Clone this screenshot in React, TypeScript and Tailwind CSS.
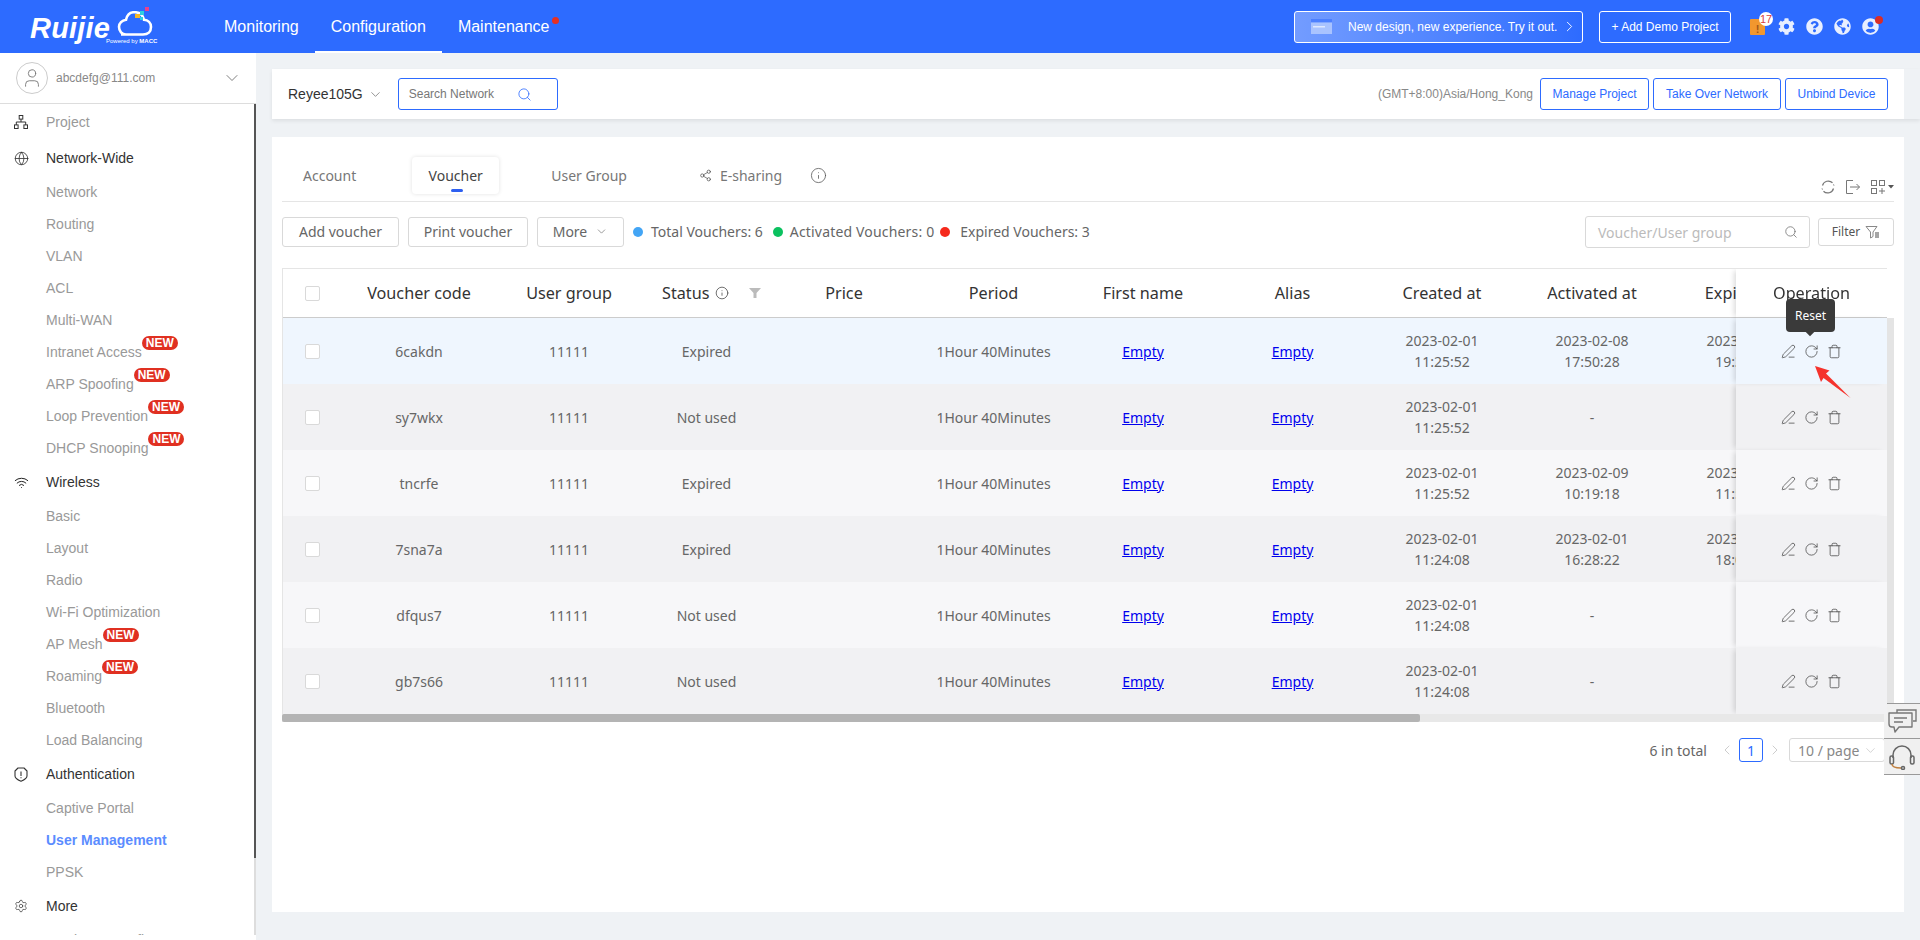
import { ChevronDown, ChevronRight, ChevronLeft, Search, Globe, Wifi, Settings, Share2, Info, PenLine, RotateCw, Trash, User } from "lucide-react";
import { FaCog, FaQuestionCircle, FaGlobeAmericas, FaUserCircle } from "react-icons/fa";

const sans = "font-['Liberation_Sans',Arial,sans-serif]";
const noto = "font-['Noto_Sans',sans-serif]";

const ProjectIcon = () => (
  <svg width="14" height="14" viewBox="0 0 14 14" fill="none" stroke="#333" strokeWidth="1">
    <rect x="5.2" y="0.5" width="3.6" height="3.6" />
    <rect x="0.5" y="9.9" width="3.6" height="3.6" />
    <rect x="9.9" y="9.9" width="3.6" height="3.6" />
    <path d="M7 4.1V7M2.3 9.9V7h9.4v2.9" />
  </svg>
);

const ShieldIcon = () => (
  <svg width="14" height="15" viewBox="0 0 14 15" fill="none" stroke="#333" strokeWidth="1.1">
    <path d="M4 1h6l3 3v5c0 2-3 4-6 5.300C4 13 1 11 1 9V4z" strokeLinejoin="round" />
    <path d="M7 4.500v4.500M7 10.300v1" />
  </svg>
);

type MenuItem = { label: string; kind: "group" | "sub"; icon?: any; isNew?: boolean; active?: boolean; muted?: boolean };

const menu: MenuItem[] = [
  { label: "Project", kind: "group", icon: <ProjectIcon />, muted: true },
  { label: "Network-Wide", kind: "group", icon: <Globe size={15} strokeWidth={1.3} color="#333" /> },
  { label: "Network", kind: "sub" },
  { label: "Routing", kind: "sub" },
  { label: "VLAN", kind: "sub" },
  { label: "ACL", kind: "sub" },
  { label: "Multi-WAN", kind: "sub" },
  { label: "Intranet Access", kind: "sub", isNew: true },
  { label: "ARP Spoofing", kind: "sub", isNew: true },
  { label: "Loop Prevention", kind: "sub", isNew: true },
  { label: "DHCP Snooping", kind: "sub", isNew: true },
  { label: "Wireless", kind: "group", icon: <Wifi size={15} strokeWidth={1.6} color="#222" /> },
  { label: "Basic", kind: "sub" },
  { label: "Layout", kind: "sub" },
  { label: "Radio", kind: "sub" },
  { label: "Wi-Fi Optimization", kind: "sub" },
  { label: "AP Mesh", kind: "sub", isNew: true },
  { label: "Roaming", kind: "sub", isNew: true },
  { label: "Bluetooth", kind: "sub" },
  { label: "Load Balancing", kind: "sub" },
  { label: "Authentication", kind: "group", icon: <ShieldIcon /> },
  { label: "Captive Portal", kind: "sub" },
  { label: "User Management", kind: "sub", active: true },
  { label: "PPSK", kind: "sub" },
  { label: "More", kind: "group", icon: <Settings size={14} strokeWidth={1.2} color="#333" /> },
  { label: "Batch CLI Config", kind: "sub" },
];

const rows = [
  { code: "6cakdn", status: "Expired", date: "2023-02-01", time: "11:25:52", act: ["2023-02-08", "17:50:28"], exp: ["2023-02-08", "19:30:28"], bg: "bg-[#eff6fe]" },
  { code: "sy7wkx", status: "Not used", date: "2023-02-01", time: "11:25:52", act: null, exp: null, bg: "bg-[#f1f1f3]" },
  { code: "tncrfe", status: "Expired", date: "2023-02-01", time: "11:25:52", act: ["2023-02-09", "10:19:18"], exp: ["2023-02-09", "11:59:18"], bg: "bg-[#f7f7f9]" },
  { code: "7sna7a", status: "Expired", date: "2023-02-01", time: "11:24:08", act: ["2023-02-01", "16:28:22"], exp: ["2023-02-01", "18:08:22"], bg: "bg-[#f1f1f3]" },
  { code: "dfqus7", status: "Not used", date: "2023-02-01", time: "11:24:08", act: null, exp: null, bg: "bg-[#f7f7f9]" },
  { code: "gb7s66", status: "Not used", date: "2023-02-01", time: "11:24:08", act: null, exp: null, bg: "bg-[#f1f1f3]" },
];

const Checkbox = () => <span className="mx-auto block h-[15px] w-[15px] -translate-x-px rounded-[2px] border border-[#d9d9d9] bg-white" />;

const Header = () => (
  <header className={`flex h-[53px] shrink-0 items-stretch bg-[#2d6bff] text-white ${sans}`}>
    <div className="relative w-[208px] shrink-0 pl-[30px]">
      <span className="block pt-[10px] text-[29px] leading-[36px] font-bold italic tracking-[0.2px]">Ruijie</span>
      <svg className="absolute top-[7px] left-[112px]" width="42" height="30" viewBox="0 0 42 30" fill="none">
        <path d="M9 27.500h22c5 0 8-3 8-7.500 0-4-3-7-7-7.300-1-4-4-7-8-7.500h-3c-4 .5-6 3-7 7.500-4 .5-7 3.500-7 7 0 4.500 3 7.800 7 7.800z" stroke="#fff" strokeWidth="2.600" />
        <rect x="23" y="7" width="5" height="4" fill="#f5b62a" />
        <rect x="28" y="4" width="4" height="4" fill="#2fd0e0" />
        <rect x="33" y="0" width="4" height="4" fill="#e9408f" />
        <rect x="28" y="10" width="3" height="3" fill="#2fd0e0" />
      </svg>
      <span className="absolute top-[37px] left-[106px] text-[6px] leading-[9px] whitespace-nowrap">Powered by <b>MACC</b></span>
    </div>
    <nav className="flex items-stretch text-[16px]">
      <a className="flex items-center px-[16px]">Monitoring</a>
      <a className="flex items-center border-b-[2px] border-white px-[16px] pt-[2px]">Configuration</a>
      <a className="relative flex items-center px-[16px]">
        Maintenance
        <span className="absolute top-[17px] right-[7px] h-[7px] w-[7px] rounded-full bg-[#e53022]" />
      </a>
    </nav>
    <div className="ml-auto flex items-center pr-[41px] text-[12px]">
      <button className="flex h-[32px] w-[289px] items-center rounded-[3px] border border-white bg-gradient-to-r from-[#739cff] to-[#2d6bff] pl-[16px]">
        <svg width="21" height="15" viewBox="0 0 21 15">
          <rect width="21" height="3.500" fill="#4d80ff" />
          <rect y="3.500" width="21" height="11.500" fill="#a9c3ff" />
          <rect x="2" y="7" width="12" height="1.500" fill="#dfe9ff" />
        </svg>
        <span className="ml-[16px]">New design, new experience. Try it out.</span>
        <ChevronRight size={17} strokeWidth={1.3} className="ml-[4px]" />
      </button>
      <button className="ml-[16px] h-[32px] w-[132px] rounded-[3px] border border-white">+ Add Demo Project</button>
      <span className="relative ml-[19px] block h-[16px] w-[15px] rounded-[1px] bg-[#f2972e] text-center text-[11px] leading-[20px] font-bold text-[#a0561a]">
        !
        <span className="absolute -top-[7px] left-[9px] flex h-[14px] w-[14px] items-center justify-center rounded-full bg-white text-[11px] font-normal text-[#d9413c]">17</span>
      </span>
      <div className="ml-[13px] flex items-center gap-[11px] text-[17px] text-[#e8efff]">
        <FaCog />
        <FaQuestionCircle />
        <FaGlobeAmericas />
        <span className="relative">
          <FaUserCircle />
          <span className="absolute -top-[2px] left-[13px] h-[8px] w-[8px] rounded-full bg-[#d92d27]" />
        </span>
      </div>
    </div>
  </header>
);

const Sidebar = () => (
  <aside className={`flex w-[256px] shrink-0 flex-col bg-white ${sans}`}>
    <div className="flex h-[51px] shrink-0 items-center border-b border-[#ddd] pr-[14px] pl-[16px]">
      <span className="flex h-[32px] w-[32px] items-center justify-center rounded-full border border-[#ccc]">
        <User size={22} strokeWidth={1} color="#777" />
      </span>
      <span className="ml-[8px] text-[12px] text-[#888]">abcdefg@111.com</span>
      <ChevronDown size={20} strokeWidth={1} color="#666" className="ml-auto" />
    </div>
    <div className="flex h-[831px] shrink-0 overflow-hidden">
      <ul className="min-w-0 flex-1 text-[14px] text-[#999]">
        {menu.map((item) =>
          item.kind === "group" ? (
            <li key={item.label} className="flex h-[36px] items-center">
              <span className="flex w-[46px] justify-center pr-[4px]">{item.icon}</span>
              <span className={item.muted ? "text-[#999]" : "text-[#333]"}>{item.label}</span>
            </li>
          ) : (
            <li key={item.label} className="flex h-[32px] shrink-0 items-center pl-[46px]">
              <span className={`relative leading-[16px] whitespace-nowrap ${item.active ? "font-bold text-[#5b8cff]" : ""}`}>
                {item.label}
                {item.isNew && (
                  <span className="absolute top-[-8px] left-full flex h-[14px] w-[36px] items-center justify-center rounded-full bg-[#e03021] text-[12px] font-bold text-white">NEW</span>
                )}
              </span>
            </li>
          )
        )}
      </ul>
      <div className="flex w-[2px] shrink-0 flex-col">
        <span className="h-[754px] bg-[#555]" />
        <span className="flex-1 bg-[#ddd]" />
      </div>
    </div>
  </aside>
);

const TopBar = () => (
  <div className={`mt-[16px] shrink-0 pr-[16px] shadow-[0_2px_4px_rgba(0,0,0,0.08)] ${sans}`}>
    <div className="flex h-[50px] items-center bg-white pr-[16px] pl-[16px]">
      <span className="text-[14px] text-[#333]">Reyee105G</span>
      <ChevronDown size={15} strokeWidth={1} color="#555" className="ml-[5px]" />
      <div className="ml-[15px] flex h-[32px] w-[160px] items-center rounded-[3px] border border-[#2d6bff] pl-[10px] text-[12px] text-[#777]">
        Search Network
        <Search size={15} strokeWidth={1.300} color="#2d6bff" className="ml-[23px]" />
      </div>
      <span className="ml-auto text-[12px] text-[#888]">(GMT+8:00)Asia/Hong_Kong</span>
      <div className="ml-[7px] flex gap-[4px] text-[12px] text-[#2d6bff]">
        <button className="h-[32px] w-[109px] rounded-[3px] border border-[#2d6bff]">Manage Project</button>
        <button className="h-[32px] w-[128px] rounded-[3px] border border-[#2d6bff]">Take Over Network</button>
        <button className="h-[32px] w-[103px] rounded-[3px] border border-[#2d6bff]">Unbind Device</button>
      </div>
    </div>
  </div>
);

const Tabs = () => (
  <div className="flex h-[65px] shrink-0 border-b border-[#e5e5e5] pt-[20px] text-[14px] text-[#777]">
    <span className="ml-[21px] flex h-[37px] items-center">Account</span>
    <span className="relative ml-[56px] flex h-[37px] w-[87px] items-center justify-center rounded-[4px] text-[#444] shadow-[0_0_4px_rgba(0,0,0,0.12)]">
      Voucher
      <span className="absolute bottom-[2px] left-[39px] h-[3px] w-[12px] rounded-full bg-[#2d5ff0]" />
    </span>
    <span className="ml-[52px] flex h-[37px] items-center">User Group</span>
    <span className="ml-[72px] flex h-[37px] items-center gap-[8px]">
      <Share2 size={13} strokeWidth={1.400} color="#555" />
      E-sharing
    </span>
    <span className="ml-[28px] flex h-[37px] items-center">
      <Info size={17} strokeWidth={1.100} color="#555" />
    </span>
    <div className="mt-[23px] ml-auto flex h-[14px] items-start gap-[11px]">
      <svg width="14" height="14" viewBox="0 0 14 14" fill="none" stroke="#777" strokeWidth="1.200">
        <path d="M1.500 5.500A6 6 0 0 1 11.500 2.800M12.500 8.500A6 6 0 0 1 2.500 11.200" />
        <path d="M1 8a6 6 0 0 0 .6 2M13 6a6 6 0 0 0-.6-2" strokeWidth="0.600" />
      </svg>
      <svg width="14" height="14" viewBox="0 0 14 14" fill="none" stroke="#777" strokeWidth="1">
        <path d="M7 .5H.5v13H7M4 7h9.500M10.500 4l3 3-3 3" />
      </svg>
      <svg width="23" height="14" viewBox="0 0 23 14" fill="none" stroke="#777" strokeWidth="1">
        <rect x=".5" y=".5" width="5" height="5" />
        <rect x="8.500" y=".5" width="5" height="5" />
        <rect x=".5" y="8.500" width="5" height="5" />
        <path d="M8 11h6M11 8v6" />
        <path d="M17 5h6l-3 3.500z" fill="#555" stroke="none" />
      </svg>
    </div>
  </div>
);

const Toolbar = () => (
  <div className="mt-[14px] flex h-[32px] shrink-0 items-center text-[14px] text-[#666]">
    <button className="h-[30px] w-[117px] rounded-[3px] border border-[#d9d9d9] pb-[2px]">Add voucher</button>
    <button className="ml-[9px] h-[30px] w-[120px] rounded-[3px] border border-[#d9d9d9] pb-[2px]">Print voucher</button>
    <button className="ml-[9px] flex h-[30px] w-[87px] items-center justify-center gap-[8px] rounded-[3px] border border-[#d9d9d9] pb-[2px]">
      More
      <ChevronDown size={13} strokeWidth={1.200} />
    </button>
    <span className="ml-[9px] h-[10px] w-[10px] rounded-full bg-[#43a5f5]" />
    <span className="ml-[8px] pb-[1px]">Total Vouchers: 6</span>
    <span className="ml-[10px] h-[10px] w-[10px] rounded-full bg-[#0bc15f]" />
    <span className="ml-[7px] pb-[1px] tracking-[0.17px]">Activated Vouchers: 0</span>
    <span className="ml-[6px] h-[10px] w-[10px] rounded-full bg-[#f5291c]" />
    <span className="ml-[10px] pb-[1px]">Expired Vouchers: 3</span>
    <div className="ml-auto flex h-[32px] w-[225px] items-center justify-between rounded-[3px] border border-[#d9d9d9] pr-[11px] pl-[12px] text-[#bbb]">
      Voucher/User group
      <Search size={14} strokeWidth={1.400} color="#777" />
    </div>
    <button className="ml-[8px] flex h-[28px] w-[76px] items-center justify-center gap-[5px] rounded-[3px] border border-[#d9d9d9] text-[12px] text-[#555]">
      Filter
      <svg width="15" height="15" viewBox="0 0 15 15" fill="none" stroke="#888" strokeWidth="1">
        <path d="M1 1.500h11L8 7v4.500L5.500 13V7z" />
        <path d="M10 8h4M10 10h4M10 12h4" strokeWidth="1.300" />
      </svg>
    </button>
  </div>
);

const OperationIcons = () => (
  <div className="flex items-center justify-center gap-[8px]">
    <PenLine size={15} strokeWidth={1.200} color="#444" />
    <RotateCw size={15} strokeWidth={1.200} color="#444" />
    <Trash size={15} strokeWidth={1.200} color="#444" />
  </div>
);

const Th = ({ children }: { children: any }) => <th className="border-b border-[#ccc] bg-white pt-[1px] text-center text-[16.200px] font-normal text-[#333]">{children}</th>;

const VoucherTable = () => (
  <div className="mt-[20px] shrink-0">
    <div className="flex">
      <div className="w-[1605px] shrink-0 overflow-hidden border-t border-l border-[#e5e5e5]">
        <table className="w-[1687px] table-fixed border-separate border-spacing-0 text-[14px] text-[#666]">
          <colgroup>
            <col className="w-[61px]" />
            <col className="w-[150px]" />
            <col className="w-[150px]" />
            <col className="w-[125px]" />
            <col className="w-[150px]" />
            <col className="w-[149px]" />
            <col className="w-[150px]" />
            <col className="w-[149px]" />
            <col className="w-[150px]" />
            <col className="w-[150px]" />
            <col className="w-[152px]" />
            <col className="w-[151px]" />
          </colgroup>
          <thead>
            <tr className="h-[49px]">
              <Th><Checkbox /></Th>
              <Th>Voucher code</Th>
              <Th>User group</Th>
              <Th>
                <div className="flex items-center pl-[18px]">
                  Status
                  <Info size={14} strokeWidth={1.300} color="#444" className="ml-[6px]" />
                  <svg className="ml-[20px]" width="12" height="12" viewBox="0 0 12 12"><path d="M0 1h12L7.500 6v5h-3V6z" fill="#bbb" /></svg>
                </div>
              </Th>
              <Th>Price</Th>
              <Th>Period</Th>
              <Th>First name</Th>
              <Th>Alias</Th>
              <Th>Created at</Th>
              <Th>Activated at</Th>
              <Th>Expired at</Th>
              <th className="sticky right-0 z-10 border-b border-[#ccc] bg-white pt-[1px] text-center text-[16.200px] font-normal text-[#333] shadow-[-4px_0_5px_-2px_rgba(0,0,0,0.14)]">Operation</th>
            </tr>
          </thead>
          <tbody>
            {rows.map((r, i) => (
              <tr key={r.code} className="h-[66px] text-center leading-[21px]">
                <td className={r.bg}><Checkbox /></td>
                <td className={r.bg}>{r.code}</td>
                <td className={r.bg}>11111</td>
                <td className={r.bg}>{r.status}</td>
                <td className={r.bg}></td>
                <td className={r.bg}>1Hour 40Minutes</td>
                <td className={r.bg}><a className="text-[#0000ee] underline">Empty</a></td>
                <td className={r.bg}><a className="text-[#0000ee] underline">Empty</a></td>
                <td className={r.bg}>{r.date}<br />{r.time}</td>
                <td className={r.bg}>{r.act ? <>{r.act[0]}<br />{r.act[1]}</> : "-"}</td>
                <td className={r.bg}>{r.exp ? <>{r.exp[0]}<br />{r.exp[1]}</> : "-"}</td>
                <td className={`${r.bg} sticky right-0 ${i === 0 ? "z-20" : "z-10"} shadow-[-4px_0_5px_-2px_rgba(0,0,0,0.14)]`}>
                  <OperationIcons />
                  {i === 0 && (
                    <>
                      <span className="absolute top-[-19px] left-[50px] flex h-[33px] w-[49px] items-center justify-center rounded-[4px] bg-[#3a3a3a] text-[12px] text-white">
                        Reset
                        <span className="absolute -bottom-[3px] left-[21px] h-[6px] w-[6px] rotate-45 bg-[#3a3a3a]" />
                      </span>
                      <svg className="absolute top-[47px] left-[78px]" width="38" height="36" viewBox="0 0 38 36">
                        <path d="M1 1l14.500 4.500-3.500 3L36.500 33 9.500 13l-2.500 4z" fill="#f5332d" />
                      </svg>
                    </>
                  )}
                </td>
              </tr>
            ))}
          </tbody>
        </table>
      </div>
      <div className="flex w-[7px] shrink-0 flex-col">
        <span className="h-[50px]" />
        <span className="flex-1 bg-[#e4e4e4]" />
      </div>
    </div>
    <div className="h-[8px] bg-[#e8e8e8]">
      <div className="h-full w-[1138px] rounded-[2px] bg-[#b4b4b4]" />
    </div>
  </div>
);

const Pagination = () => (
  <div className="mt-[16px] flex h-[24px] shrink-0 items-center pr-[9px] text-[14px] text-[#666]">
    <span className="ml-auto">6 in total</span>
    <ChevronLeft size={16} strokeWidth={1.100} color="#bbb" className="ml-[12px]" />
    <span className="ml-[4px] flex h-[24px] w-[24px] items-center justify-center rounded-[3px] border border-[#2d6bff] text-[#2d6bff]">1</span>
    <ChevronRight size={16} strokeWidth={1.100} color="#bbb" className="ml-[4px]" />
    <span className="ml-[6px] flex h-[24px] w-[96px] items-center rounded-[3px] border border-[#d9d9d9] pl-[8px] text-[#888]">
      10 / page
      <ChevronDown size={15} strokeWidth={1} color="#bbb" className="ml-[4px]" />
    </span>
  </div>
);

const SideWidgets = () => (
  <div className="absolute top-[703px] right-0 w-[36px] bg-[#f0f0f0]">
    <div className="flex h-[36px] items-center justify-center border-t border-b border-[#999]">
      <svg width="29" height="25" viewBox="0 0 29 25" fill="none" stroke="#777" strokeWidth="1.400">
        <path d="M9 4V1h19v11h-3" />
        <path d="M1 4h23v14H11l-4 5-1-5H4q-3 0-3-3z" fill="#f0f0f0" strokeLinejoin="round" />
        <path d="M6 9h13M6 13h9" />
      </svg>
    </div>
    <div className="flex h-[36px] items-center justify-center border-b border-[#999]">
      <svg width="26" height="26" viewBox="0 0 26 26" fill="none" stroke="#666" strokeWidth="1.500">
        <path d="M4 14V11a9 9 0 0 1 18 0v3" />
        <rect x="1" y="12" width="3.500" height="8" rx="1.500" />
        <rect x="21.500" y="12" width="3.500" height="8" rx="1.500" />
        <path d="M3 20c0 3 3 4 9 4" stroke="#c08040" />
        <circle cx="14" cy="24" r="1.500" />
      </svg>
    </div>
  </div>
);

export default function App() {
  return (
    <div className="relative flex h-[940px] w-[1920px] flex-col overflow-hidden bg-[#eff2f5]">
      <Header />
      <div className="flex min-h-0 flex-1">
        <Sidebar />
        <main className="flex min-w-0 flex-1 flex-col pl-[16px]">
          <TopBar />
          <section className={`mt-[18px] mr-[16px] flex h-[775px] shrink-0 flex-col bg-white px-[10px] ${noto}`}>
            <Tabs />
            <Toolbar />
            <VoucherTable />
            <Pagination />
          </section>
        </main>
      </div>
      <SideWidgets />
    </div>
  );
}
